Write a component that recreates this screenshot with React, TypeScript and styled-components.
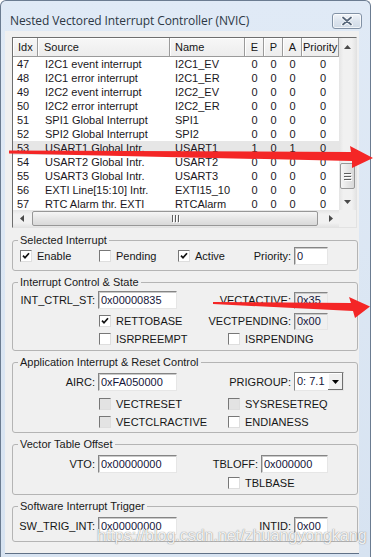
import type { ReactNode } from 'react';
import styled, { createGlobalStyle } from 'styled-components';

const GlobalStyle = createGlobalStyle`
  html, body {
    margin: 0;
    padding: 0;
    background: #ffffff;
  }
  body {
    font-family: "Liberation Sans", Arial, sans-serif;
    font-size: 11px;
    color: #161616;
  }
  *, *::before, *::after {
    box-sizing: border-box;
  }
`;

const COLS = '25px 132px 75px 19px 19px 19px 37px';

const Stage = styled.div`
  position: relative;
  width: 373px;
  height: 557px;
  overflow: hidden;
`;

const Window = styled.div`
  width: 371px;
  height: 557px;
  display: flex;
  flex-direction: column;
  padding: 0 11px 3px 4px;
  background: linear-gradient(#e0eaf6, #d7e3f1);
  border: 1px solid #6b7c91;
  border-bottom: none;
  border-radius: 6px 6px 0 0;
`;

const TitleBar = styled.div`
  height: 30px;
  flex: none;
  display: flex;
  align-items: center;
  justify-content: space-between;
  padding: 9px 0 0 5px;
  margin-right: -3px;
`;

const Title = styled.span`
  font-family: "Open Sans", "Noto Sans", sans-serif;
  font-size: 12px;
  color: #2d3845;
  letter-spacing: -0.1px;
`;

const CloseButton = styled.div`
  width: 30px;
  height: 16px;
  display: flex;
  align-items: center;
  justify-content: center;
  border: 1px solid #8292a6;
  border-radius: 3px;
  background: linear-gradient(#f1f5fa, #dce4ee 50%, #d0dae6);
  box-shadow: inset 0 0 0 1px rgba(255, 255, 255, 0.7);
`;

const Panel = styled.div`
  flex: 1;
  display: flex;
  flex-direction: column;
  align-items: flex-start;
  padding: 6px 2px 0 7px;
  background: #f0f0f0;
  border-bottom: 1px solid #5f7086;
`;

/* ---------- list view ---------- */

const ListView = styled.div`
  width: 345px;
  height: 191px;
  flex: none;
  display: grid;
  grid-template-columns: 326px 17px;
  grid-template-rows: 172px 17px;
  background: #ffffff;
  border: 1px solid;
  border-color: #6e6e6e #e2e2e2 #e2e2e2 #6e6e6e;
`;

const TableArea = styled.div`
  overflow: hidden;
`;

const HeaderRow = styled.div`
  display: grid;
  grid-template-columns: ${COLS};
  height: 19px;
`;

const HeaderCell = styled.div<{ $align?: string; $pl?: number }>`
  line-height: 19px;
  padding-left: ${p => p.$pl ?? 0}px;
  text-align: ${p => p.$align ?? 'left'};
  background: linear-gradient(#f7f7f7, #ececec);
  box-shadow: inset -1px -1px 0 #9a9a9a, inset 1px 1px 0 #ffffff;
  white-space: nowrap;
  overflow: hidden;
`;

const DataRow = styled.div<{ $sel?: boolean }>`
  display: grid;
  grid-template-columns: ${COLS};
  height: 14px;
  line-height: 14px;
  background: ${p => (p.$sel ? '#e6e6e6' : 'transparent')};
`;

const Cell = styled.div<{ $align?: string; $pl?: number; $pr?: number }>`
  padding-left: ${p => p.$pl ?? 0}px;
  padding-right: ${p => p.$pr ?? 0}px;
  text-align: ${p => p.$align ?? 'left'};
  white-space: nowrap;
  overflow: hidden;
  color: #1b1722;
`;

const VScroll = styled.div`
  display: flex;
  flex-direction: column;
  background: linear-gradient(90deg, #e4e4e4, #f1f1f1 25%, #f1f1f1 75%, #e4e4e4);
`;

const HScroll = styled.div`
  display: flex;
  align-items: stretch;
  background: linear-gradient(#e4e4e4, #f1f1f1 25%, #f1f1f1 75%, #e4e4e4);
`;

const ArrowBtn = styled.div`
  width: 17px;
  height: 17px;
  flex: none;
  display: flex;
  align-items: center;
  justify-content: center;
`;

const Track = styled.div<{ $dir: 'row' | 'column' }>`
  flex: 1;
  display: flex;
  flex-direction: ${p => p.$dir};
`;

const Thumb = styled.div<{ $dir: 'row' | 'column' }>`
  display: flex;
  flex-direction: ${p => (p.$dir === 'row' ? 'row' : 'column')};
  align-items: center;
  justify-content: center;
  gap: 2px;
  border: 1px solid #979797;
  border-radius: 2px;
  background: ${p =>
    p.$dir === 'row'
      ? 'linear-gradient(#f6f6f6, #e6e6e6 50%, #d9d9d9)'
      : 'linear-gradient(90deg, #f6f6f6, #e6e6e6 50%, #d9d9d9)'};
`;

const Grip = styled.span<{ $dir: 'row' | 'column' }>`
  display: block;
  width: ${p => (p.$dir === 'row' ? '1px' : '7px')};
  height: ${p => (p.$dir === 'row' ? '7px' : '1px')};
  background: #5e5e5e;
  box-shadow: 1px 1px 0 #ffffff;
`;

const Corner = styled.div`
  background: #f0f0f0;
`;

/* ---------- group boxes ---------- */

const Group = styled.fieldset<{ $top: number; $pb: number }>`
  width: 346px;
  min-width: 0;
  margin: ${p => p.$top}px 0 0 0;
  padding: 0 0 ${p => p.$pb}px 0;
  border: 1px solid #b4b4b4;
  border-radius: 3px;
`;

const Legend = styled.legend`
  margin-left: 5px;
  padding: 0 2px;
  line-height: 14px;
  font-size: 11px;
  color: #1a1a1a;
`;

const FormGrid = styled.div<{ $rows: string }>`
  display: grid;
  grid-template-columns: 85px 80px 50px 65px 64px;
  grid-template-rows: ${p => p.$rows};
  align-items: center;
`;

const FieldLabel = styled.span`
  grid-column: 1;
  text-align: right;
  padding-right: 3px;
  white-space: nowrap;
`;

const RightField = styled.div<{ $span?: string }>`
  grid-column: ${p => p.$span ?? '3 / 6'};
  display: flex;
  align-items: center;
  justify-content: flex-end;
  gap: 3px;
  padding-right: 29px;
  white-space: nowrap;
`;

const TextBox = styled.input<{ $w: number; $h?: number; $gray?: boolean }>`
  width: ${p => p.$w}px;
  height: ${p => p.$h ?? 18}px;
  margin: 0;
  padding: 0 0 0 2px;
  font-family: "Liberation Sans", Arial, sans-serif;
  font-size: 11px;
  color: #15153a;
  background: ${p => (p.$gray ? '#f0f0f0' : '#ffffff')};
  border: 1px solid;
  border-color: #858585 #e6e6e6 #e6e6e6 #858585;
  box-shadow: inset 1px 1px 0 #c9c9c9;
  outline: none;
  grid-column: 2;
`;

const SelectBox = styled.div`
  width: 50px;
  height: 19px;
  margin-right: -16px;
  display: flex;
  align-items: stretch;
  background: #ffffff;
  border: 1px solid;
  border-color: #858585 #e6e6e6 #e6e6e6 #858585;
`;

const SelectValue = styled.span`
  flex: 1;
  padding-left: 2px;
  line-height: 17px;
  color: #15153a;
`;

const DropButton = styled.span`
  width: 15px;
  flex: none;
  display: flex;
  align-items: center;
  justify-content: center;
  background: #f0f0f0;
  box-shadow: inset -1px -1px 0 #6f6f6f, inset 1px 1px 0 #ffffff;
`;

const CheckItem = styled.div<{ $col: string; $pl: number }>`
  grid-column: ${p => p.$col};
  display: flex;
  align-items: center;
  gap: 5px;
  padding-left: ${p => p.$pl}px;
  white-space: nowrap;
`;

const Box = styled.span<{ $disabled?: boolean }>`
  width: 12px;
  height: 12px;
  flex: none;
  display: flex;
  align-items: center;
  justify-content: center;
  background: ${p => (p.$disabled ? '#e3e3e3' : '#ffffff')};
  border: 1px solid;
  border-color: #777777 #dedede #dedede #777777;
`;

/* ---------- annotations ---------- */

const Overlay = styled.svg`
  position: absolute;
  left: 0;
  top: 0;
  width: 373px;
  height: 557px;
  pointer-events: none;
`;

const Watermark = styled.span`
  position: absolute;
  left: 97px;
  top: 527px;
  font-family: "Liberation Sans", Arial, sans-serif;
  font-size: 16px;
  line-height: 18px;
  color: rgba(255, 255, 255, 0.9);
  text-shadow: 0 0 1px rgba(90, 90, 90, 0.5), 0 0 1px rgba(90, 90, 90, 0.5);
  white-space: nowrap;
  pointer-events: none;
`;

type Row = { idx: string; src: string; name: string; e: string; p: string; a: string; pri: string; sel?: boolean };

const rows: Row[] = [
  { idx: '47', src: 'I2C1 event interrupt', name: 'I2C1_EV', e: '0', p: '0', a: '0', pri: '0' },
  { idx: '48', src: 'I2C1 error interrupt', name: 'I2C1_ER', e: '0', p: '0', a: '0', pri: '0' },
  { idx: '49', src: 'I2C2 event interrupt', name: 'I2C2_EV', e: '0', p: '0', a: '0', pri: '0' },
  { idx: '50', src: 'I2C2 error interrupt', name: 'I2C2_ER', e: '0', p: '0', a: '0', pri: '0' },
  { idx: '51', src: 'SPI1 Global Interrupt', name: 'SPI1', e: '0', p: '0', a: '0', pri: '0' },
  { idx: '52', src: 'SPI2 Global Interrupt', name: 'SPI2', e: '0', p: '0', a: '0', pri: '0' },
  { idx: '53', src: 'USART1 Global Intr.', name: 'USART1', e: '1', p: '0', a: '1', pri: '0', sel: true },
  { idx: '54', src: 'USART2 Global Intr.', name: 'USART2', e: '0', p: '0', a: '0', pri: '0' },
  { idx: '55', src: 'USART3 Global Intr.', name: 'USART3', e: '0', p: '0', a: '0', pri: '0' },
  { idx: '56', src: 'EXTI Line[15:10] Intr.', name: 'EXTI15_10', e: '0', p: '0', a: '0', pri: '0' },
  { idx: '57', src: 'RTC Alarm thr. EXTI', name: 'RTCAlarm', e: '0', p: '0', a: '0', pri: '0' },
];

const Tri = ({ dir }: { dir: 'up' | 'down' | 'left' | 'right' }) => {
  const pts = {
    up: '0,4 3.5,0 7,4',
    down: '0,0 7,0 3.5,4',
    left: '4,0 4,7 0,3.5',
    right: '0,0 4,3.5 0,7',
  }[dir];
  const vertical = dir === 'up' || dir === 'down';
  return (
    <svg width={vertical ? 7 : 4} height={vertical ? 4 : 7} viewBox={vertical ? '0 0 7 4' : '0 0 4 7'}>
      <polygon points={pts} fill="#4a4a4a" />
    </svg>
  );
};

const CheckMark = () => (
  <svg width="8" height="8" viewBox="0 0 8 8">
    <path d="M1 3.6 L3 5.8 L7 1.2" fill="none" stroke="#111" strokeWidth="1.7" />
  </svg>
);

type CheckProps = { col: string; pl?: number; checked?: boolean; disabled?: boolean; children: ReactNode };

const Check = ({ col, pl = 0, checked, disabled, children }: CheckProps) => (
  <CheckItem $col={col} $pl={pl}>
    <Box $disabled={disabled}>{checked && <CheckMark />}</Box>
    {children}
  </CheckItem>
);

const App = () => {
  return (
    <Stage>
      <GlobalStyle />
      <Window>
        <TitleBar>
          <Title>Nested Vectored Interrupt Controller (NVIC)</Title>
          <CloseButton>
            <svg width="12" height="10" viewBox="0 0 12 10">
              <path d="M2 1.5 L10 8.5 M10 1.5 L2 8.5" stroke="#ffffff" strokeWidth="3.6" strokeLinecap="round" />
              <path d="M2 1.5 L10 8.5 M10 1.5 L2 8.5" stroke="#56667a" strokeWidth="1.8" strokeLinecap="round" />
            </svg>
          </CloseButton>
        </TitleBar>

        <Panel>
          <ListView>
            <TableArea>
              <HeaderRow>
                <HeaderCell $pl={5}>Idx</HeaderCell>
                <HeaderCell $pl={6}>Source</HeaderCell>
                <HeaderCell $pl={5}>Name</HeaderCell>
                <HeaderCell $align="center">E</HeaderCell>
                <HeaderCell $align="center">P</HeaderCell>
                <HeaderCell $align="center">A</HeaderCell>
                <HeaderCell $pl={1}>Priority</HeaderCell>
              </HeaderRow>
              {rows.map(r => (
                <DataRow key={r.idx} $sel={r.sel}>
                  <Cell $pl={4}>{r.idx}</Cell>
                  <Cell $pl={7}>{r.src}</Cell>
                  <Cell $pl={5}>{r.name}</Cell>
                  <Cell $align="center">{r.e}</Cell>
                  <Cell $align="center">{r.p}</Cell>
                  <Cell $align="center">{r.a}</Cell>
                  <Cell $align="right" $pr={13}>{r.pri}</Cell>
                </DataRow>
              ))}
            </TableArea>

            <VScroll>
              <ArrowBtn><Tri dir="up" /></ArrowBtn>
              <Track $dir="column">
                <Thumb $dir="column" style={{ height: 26, margin: '108px 1px 0' }}>
                  <Grip $dir="column" />
                  <Grip $dir="column" />
                  <Grip $dir="column" />
                </Thumb>
              </Track>
              <ArrowBtn><Tri dir="down" /></ArrowBtn>
            </VScroll>

            <HScroll>
              <ArrowBtn><Tri dir="left" /></ArrowBtn>
              <Track $dir="row">
                <Thumb $dir="row" style={{ width: 286, margin: '1px 0 1px 2px' }}>
                  <Grip $dir="row" />
                  <Grip $dir="row" />
                  <Grip $dir="row" />
                </Thumb>
              </Track>
              <ArrowBtn><Tri dir="right" /></ArrowBtn>
            </HScroll>
            <Corner />
          </ListView>

          <Group $top={5} $pb={5}>
            <Legend>Selected Interrupt</Legend>
            <FormGrid $rows="18px">
              <Check col="1" pl={7} checked>Enable</Check>
              <Check col="2" pl={1}>Pending</Check>
              <Check col="3" pl={0} checked>Active</Check>
              <RightField $span="4 / 6">
                Priority:
                <TextBox $w={34} readOnly value="0" />
              </RightField>
            </FormGrid>
          </Group>

          <Group $top={4} $pb={3}>
            <Legend>Interrupt Control &amp; State</Legend>
            <FormGrid $rows="22px 20px 16px">
              <FieldLabel>INT_CTRL_ST:</FieldLabel>
              <TextBox $w={79} readOnly value="0x00000835" />
              <RightField>
                VECTACTIVE:
                <TextBox $w={34} $h={17} $gray readOnly value="0x35" />
              </RightField>
              <Check col="2" pl={1} checked>RETTOBASE</Check>
              <RightField>
                VECTPENDING:
                <TextBox $w={34} $h={17} $gray readOnly value="0x00" />
              </RightField>
              <Check col="2" pl={1}>ISRPREEMPT</Check>
              <Check col="4">ISRPENDING</Check>
            </FormGrid>
          </Group>

          <Group $top={4} $pb={2}>
            <Legend>Application Interrupt &amp; Reset Control</Legend>
            <FormGrid $rows="25px 20px 16px">
              <FieldLabel>AIRC:</FieldLabel>
              <TextBox $w={79} readOnly value="0xFA050000" />
              <RightField>
                PRIGROUP:
                <SelectBox>
                  <SelectValue>0: 7.1</SelectValue>
                  <DropButton>
                    <svg width="7" height="4" viewBox="0 0 7 4">
                      <polygon points="0,0 7,0 3.5,4" fill="#000" />
                    </svg>
                  </DropButton>
                </SelectBox>
              </RightField>
              <Check col="2" pl={1} disabled>VECTRESET</Check>
              <Check col="4" disabled>SYSRESETREQ</Check>
              <Check col="2" pl={1} disabled>VECTCLRACTIVE</Check>
              <Check col="4">ENDIANESS</Check>
            </FormGrid>
          </Group>

          <Group $top={4} $pb={5}>
            <Legend>Vector Table Offset</Legend>
            <FormGrid $rows="25px 13px">
              <FieldLabel>VTO:</FieldLabel>
              <TextBox $w={79} readOnly value="0x00000000" />
              <RightField>
                TBLOFF:
                <TextBox $w={67} readOnly value="0x000000" />
              </RightField>
              <Check col="4">TBLBASE</Check>
            </FormGrid>
          </Group>

          <Group $top={4} $pb={3}>
            <Legend>Software Interrupt Trigger</Legend>
            <FormGrid $rows="25px">
              <FieldLabel>SW_TRIG_INT:</FieldLabel>
              <TextBox $w={79} readOnly value="0x00000000" />
              <RightField>
                INTID:
                <TextBox $w={34} readOnly value="0x00" />
              </RightField>
            </FormGrid>
          </Group>
        </Panel>
      </Window>

      <Overlay viewBox="0 0 373 557">
        <polygon
          points="9,150.5 351,152 350,146 373,158 352,168 352,161 9,153.5"
          fill="#f42626"
        />
        <polygon
          points="213,302 351,303 349,297 370,306.5 355,318 353,311 213,304"
          fill="#f42626"
        />
      </Overlay>
      <Watermark>https://blog.csdn.net/zhuangyongkang</Watermark>
    </Stage>
  );
};

export default App;
